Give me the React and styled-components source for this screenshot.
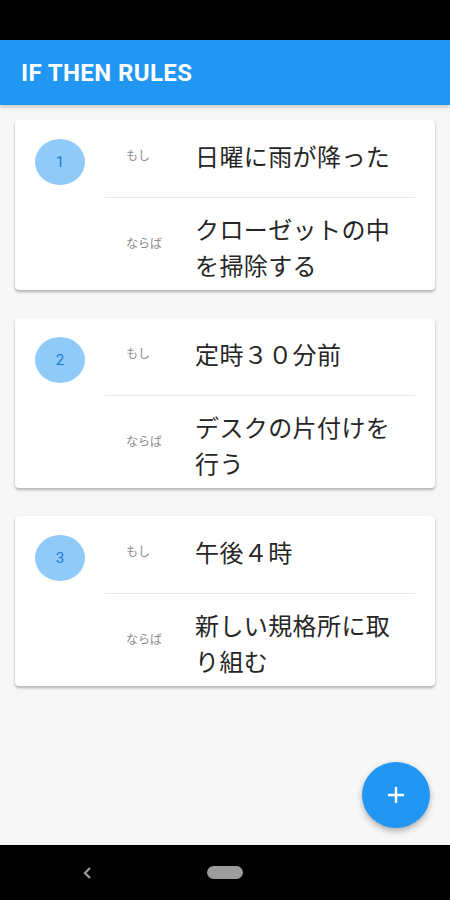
import React from 'react';
import styled, { createGlobalStyle } from 'styled-components';

const GlobalStyle = createGlobalStyle`
  html, body { margin: 0; padding: 0; }
  body {
    font-family: Roboto, "Noto Sans CJK JP", sans-serif;
    background: #000;
  }
`;

const Screen = styled.div`
  width: 450px;
  height: 900px;
  display: flex;
  flex-direction: column;
  overflow: hidden;
`;

const StatusBar = styled.div`
  height: 40px;
  background: #000;
  flex-shrink: 0;
`;

const AppBar = styled.div`
  height: 65px;
  background: #2196f3;
  display: flex;
  align-items: center;
  padding-left: 21px;
  flex-shrink: 0;
  box-shadow: 0 2px 4px rgba(0, 0, 0, 0.2);
  position: relative;
  z-index: 1;
`;

const Title = styled.div`
  color: #fff;
  font-family: Roboto, sans-serif;
  font-weight: 700;
  font-size: 24px;
  letter-spacing: 0.4px;
  margin-top: 1px;
`;

const Content = styled.div`
  flex: 1;
  background: #f7f7f7;
  position: relative;
  padding: 15px 15px 0;
  display: flex;
  flex-direction: column;
  gap: 28px;
`;

const Card = styled.div`
  background: #fff;
  border-radius: 4px;
  box-shadow: 0 2px 3px rgba(0, 0, 0, 0.28), 0 0 1px rgba(0, 0, 0, 0.1);
  display: flex;
  height: 170px;
`;

const Leading = styled.div`
  width: 90px;
  padding: 19px 0 0 20px;
  box-sizing: border-box;
  flex-shrink: 0;
`;

const Badge = styled.div`
  width: 50px;
  height: 46px;
  border-radius: 50%;
  background: #90caf9;
  color: #1e7bd6;
  font-family: Roboto, sans-serif;
  font-size: 15px;
  display: flex;
  align-items: center;
  justify-content: center;
`;

const Rows = styled.div`
  flex: 1;
  display: flex;
  flex-direction: column;
  padding-right: 20px;
`;

const Row = styled.div`
  display: flex;
  align-items: flex-start;
  padding: ${p => p.$pad};
  border-bottom: ${p => (p.$divider ? '1px solid #e6e6e6' : 'none')};
`;

const Label = styled.div`
  width: 90px;
  padding-left: 21px;
  box-sizing: border-box;
  flex-shrink: 0;
  font-family: "Noto Sans CJK JP", sans-serif;
  font-size: 12px;
  line-height: 16px;
  color: #8a8a8a;
  margin-top: ${p => p.$top}px;
`;

const Text = styled.div`
  flex: 1;
  max-width: 218px;
  font-family: "Noto Sans CJK JP", sans-serif;
  font-size: 24px;
  line-height: 36px;
  color: #262626;
  letter-spacing: 0.4px;
  word-break: break-all;
`;

const Fab = styled.button`
  position: absolute;
  right: 20px;
  bottom: 17px;
  width: 68px;
  height: 66px;
  border-radius: 50%;
  border: none;
  background: #2196f3;
  box-shadow: 0 3px 6px rgba(0, 0, 0, 0.3);
  display: flex;
  align-items: center;
  justify-content: center;
  padding: 0;
`;

const NavBar = styled.div`
  height: 55px;
  background: #000;
  flex-shrink: 0;
  display: flex;
  align-items: center;
  position: relative;
`;

const Back = styled.div`
  width: 175px;
  display: flex;
  justify-content: center;
`;

const HomePill = styled.div`
  width: 36px;
  height: 13px;
  border-radius: 7px;
  background: #9c9c9c;
  margin-left: 32px;
`;

const rules = [
  { cond: '日曜に雨が降った', act: 'クローゼットの中を掃除する' },
  { cond: '定時３０分前', act: 'デスクの片付けを行う' },
  { cond: '午後４時', act: '新しい規格所に取り組む' },
];

export default function App() {
  return (
    <Screen>
      <GlobalStyle />
      <StatusBar />
      <AppBar>
        <Title>IF THEN RULES</Title>
      </AppBar>
      <Content>
        {rules.map((r, i) => (
          <Card key={i}>
            <Leading>
              <Badge>{i + 1}</Badge>
            </Leading>
            <Rows>
              <Row $divider $pad="18px 0 23px">
                <Label $top={9}>もし</Label>
                <Text>{r.cond}</Text>
              </Row>
              <Row $pad="13px 0 0">
                <Label $top={24}>ならば</Label>
                <Text>{r.act}</Text>
              </Row>
            </Rows>
          </Card>
        ))}
        <Fab>
          <svg width="20" height="20" viewBox="0 0 20 20">
            <path d="M10 2v16M2 10h16" stroke="#fff" strokeWidth="2.4" />
          </svg>
        </Fab>
      </Content>
      <NavBar>
        <Back>
          <svg width="12" height="16" viewBox="0 0 12 16">
            <path d="M8 3L3 8l5 5" stroke="#9c9c9c" strokeWidth="2.2" fill="none" />
          </svg>
        </Back>
        <HomePill />
      </NavBar>
    </Screen>
  );
}
